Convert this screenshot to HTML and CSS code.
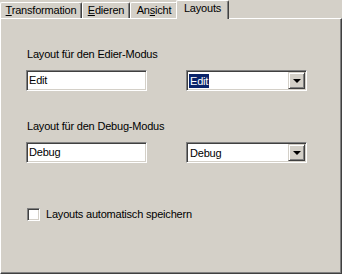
FILE: index.html
```html
<!DOCTYPE html>
<html lang="de">
<head>
    <meta charset="UTF-8">
    <meta name="viewport" content="width=device-width, initial-scale=1.0">
    <title>Layouts</title>
    <link rel="stylesheet" href="styles.css">
</head>
<body>
    <div class="dialog">
        <div class="tabs">
            <div class="tab tab-transform"><u>T</u>ransformation</div>
            <div class="tab tab-edit"><u>E</u>dieren</div>
            <div class="tab tab-view">An<u>s</u>icht</div>
            <div class="tab tab-layouts active">Layouts</div>
        </div>

        <div class="panel">
            <div class="field-grid">
                <div class="label first">Layout für den Edier-Modus</div>
                <div class="textbox">Edit</div>
                <div class="combo">
                    <span class="combo-value selected">Edit</span>
                    <span class="combo-button"><span class="arrow"></span></span>
                </div>

                <div class="label">Layout für den Debug-Modus</div>
                <div class="textbox">Debug</div>
                <div class="combo">
                    <span class="combo-value">Debug</span>
                    <span class="combo-button"><span class="arrow"></span></span>
                </div>
            </div>

            <div class="check-row">
                <span class="checkbox"></span>
                <span>Layouts automatisch speichern</span>
            </div>
        </div>
    </div>
</body>
</html>
```

FILE: styles.css
```css
:root {
    --face: #d4d0c8;
    --light: #ffffff;
    --shadow: #808080;
    --dark: #404040;
    --select: #0a246a;
}

body {
    margin: 0;
    background-color: var(--face);
    font-family: 'Liberation Sans', Arial, sans-serif;
    font-size: 11px;
    letter-spacing: -0.2px;
    color: #000;
}

.dialog {
    width: 342px;
    height: 274px;
    display: flex;
    flex-direction: column;
}

/* tab strip */
.tabs {
    display: flex;
    align-items: flex-end;
    height: 18px;
}

.tab {
    height: 16px;
    box-sizing: border-box;
    border-top: 1px solid var(--light);
    border-left: 1px solid var(--light);
    border-right: 1px solid var(--dark);
    box-shadow: inset -1px 0 var(--shadow);
    border-radius: 2px 2px 0 0;
    text-align: center;
    line-height: 15px;
    white-space: nowrap;
}

.tab-transform { width: 82px; }
.tab-edit { width: 48px; }
.tab-view { width: 48px; }

.tab-layouts {
    width: 53px;
}

.tab.active {
    height: 19px;
    margin: 0 -2px -1px -2px;
    line-height: 15px;
    background-color: var(--face);
    position: relative;
    z-index: 1;
}

/* page */
.panel {
    flex: 1;
    box-sizing: border-box;
    border-top: 1px solid var(--light);
    border-left: 1px solid var(--light);
    border-right: 1px solid var(--dark);
    border-bottom: 1px solid var(--dark);
    box-shadow: inset -1px -1px var(--shadow);
    padding: 29px 0 0 25px;
}

.field-grid {
    display: grid;
    grid-template-columns: 121px 121px;
    column-gap: 39px;
}

.label {
    grid-column: 1 / -1;
    line-height: 13px;
    margin: 29px 0 9px 1px;
    white-space: nowrap;
}

.label.first {
    margin-top: 0;
}

.textbox,
.combo {
    height: 21px;
    box-sizing: border-box;
    background-color: #fff;
    border: 1px solid;
    border-color: var(--shadow) var(--light) var(--light) var(--shadow);
    box-shadow: inset 1px 1px var(--dark), inset -1px -1px var(--face);
}

.textbox {
    padding: 1px 0 0 2px;
    line-height: 16px;
}

.combo {
    display: flex;
    align-items: center;
    justify-content: space-between;
    padding: 1px;
}

.combo-value {
    margin-left: 1px;
    padding: 0 1px;
    line-height: 14px;
}

.combo-value.selected {
    background-color: var(--select);
    color: #fff;
}

.combo-button {
    width: 17px;
    height: 17px;
    box-sizing: border-box;
    background-color: var(--face);
    border: 1px solid;
    border-color: var(--face) var(--dark) var(--dark) var(--face);
    box-shadow: inset 1px 1px var(--light), inset -1px -1px var(--shadow);
    display: flex;
    align-items: center;
    justify-content: center;
}

.arrow {
    width: 0;
    height: 0;
    border-left: 4px solid transparent;
    border-right: 4px solid transparent;
    border-top: 4px solid #000;
    margin-top: 1px;
}

.check-row {
    display: flex;
    align-items: center;
    gap: 6px;
    margin: 45px 0 0 1px;
    line-height: 13px;
}

.checkbox {
    width: 13px;
    height: 13px;
    box-sizing: border-box;
    background-color: #fff;
    border: 1px solid;
    border-color: var(--shadow) var(--light) var(--light) var(--shadow);
    box-shadow: inset 1px 1px var(--dark), inset -1px -1px var(--face);
}
```
